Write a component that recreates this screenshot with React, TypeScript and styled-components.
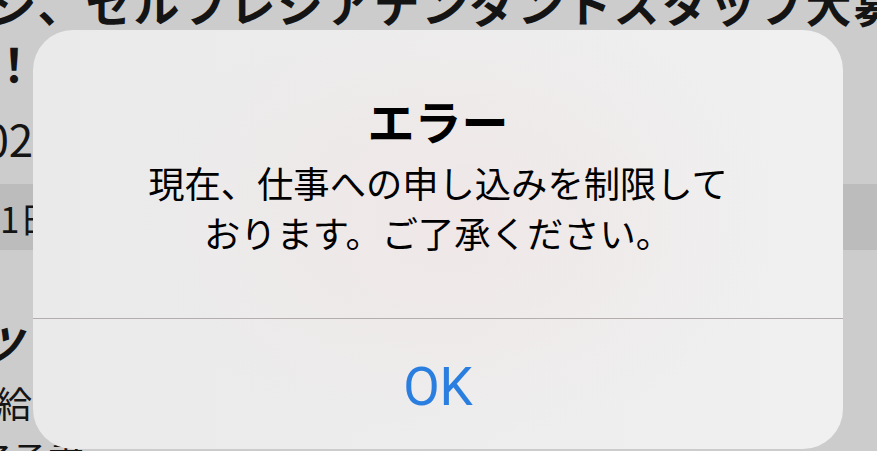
import React from "react";
import styled, { createGlobalStyle } from "styled-components";

const GlobalStyle = createGlobalStyle`
  html, body {
    margin: 0;
    padding: 0;
    width: 877px;
    height: 451px;
    overflow: hidden;
    background: #fff;
    font-family: "Noto Sans CJK JP", "Noto Sans", sans-serif;
    color: #1a1a1a;
  }
`;

const Screen = styled.div`
  position: relative;
  width: 877px;
  height: 451px;
  overflow: hidden;
`;

const Page = styled.div`
  display: flex;
  flex-direction: column;
  white-space: nowrap;
`;

const Heading = styled.h1<{ $shift: number }>`
  margin: -28px 0 0 ${(p) => p.$shift}px;
  font-size: 46px;
  line-height: 60px;
  font-weight: 700;
  letter-spacing: 2px;
`;

const DateLine = styled.div<{ $shift: number }>`
  margin: 18px 0 0 ${(p) => p.$shift}px;
  font-size: 44px;
  line-height: 56px;
`;

const TagBand = styled.div<{ $shift: number }>`
  margin-top: 18px;
  height: 66px;
  display: flex;
  align-items: center;
  padding-left: ${(p) => p.$shift}px;
  background: #ebebeb;
  font-size: 35px;
`;

const SectionTitle = styled.h2<{ $shift: number }>`
  margin: 65px 0 0 ${(p) => p.$shift}px;
  font-size: 44px;
  line-height: 56px;
  font-weight: 700;
  font-style: italic;
`;

const BodyText = styled.p<{ $shift: number; $gap: number }>`
  margin: ${(p) => p.$gap}px 0 0 ${(p) => p.$shift}px;
  font-size: 36px;
  line-height: 44px;
`;

const Dim = styled.div`
  position: absolute;
  inset: 0;
  background: rgba(0, 0, 0, 0.2);
`;

const Alert = styled.div`
  position: absolute;
  left: 33px;
  top: 30px;
  width: 810px;
  height: 419px;
  border-radius: 40px;
  overflow: hidden;
  display: flex;
  flex-direction: column;
  background:
    radial-gradient(ellipse 320px 220px at 52% 45%, rgba(242, 226, 226, 0.55), rgba(242, 226, 226, 0) 100%),
    linear-gradient(90deg, #eaeaea 0%, #ededed 50%, #f0f0f0 100%);
`;

const AlertBody = styled.div`
  height: 288px;
  box-sizing: border-box;
  padding: 61px 100px 0;
  display: flex;
  flex-direction: column;
  align-items: center;
  text-align: center;
`;

const AlertTitle = styled.div`
  font-size: 47px;
  line-height: 58px;
  font-weight: 700;
  color: #000;
`;

const AlertMessage = styled.div`
  margin-top: 8px;
  font-size: 36.3px;
  line-height: 50px;
  color: #000;
`;

const AlertActions = styled.div`
  flex: 1;
  display: flex;
  border-top: 1px solid #b3adad;
`;

const ActionButton = styled.button`
  flex: 1;
  border: none;
  background: transparent;
  padding: 6px 0 0;
  font-family: Roboto, "Liberation Sans", sans-serif;
  font-size: 53px;
  font-weight: 400;
  color: #2a7ee0;
  cursor: pointer;
`;

export default function App() {
  return (
    <>
      <GlobalStyle />
      <Screen>
        <Page>
          <Heading $shift={-9}>
            ジ、セルフレジアテンダントスタッフ大募集
            <br />！
          </Heading>
          <DateLine $shift={-40}>2023/12/01 更新</DateLine>
          <TagBand $shift={-15}>1日だけOK</TagBand>
          <SectionTitle $shift={-66}>コツ</SectionTitle>
          <BodyText $shift={-4} $gap={9}>給与・待遇</BodyText>
          <BodyText $shift={-24} $gap={12}>了承書</BodyText>
        </Page>
        <Dim />
        <Alert>
          <AlertBody>
            <AlertTitle>エラー</AlertTitle>
            <AlertMessage>現在、仕事への申し込みを制限しております。ご了承ください。</AlertMessage>
          </AlertBody>
          <AlertActions>
            <ActionButton>OK</ActionButton>
          </AlertActions>
        </Alert>
      </Screen>
    </>
  );
}
